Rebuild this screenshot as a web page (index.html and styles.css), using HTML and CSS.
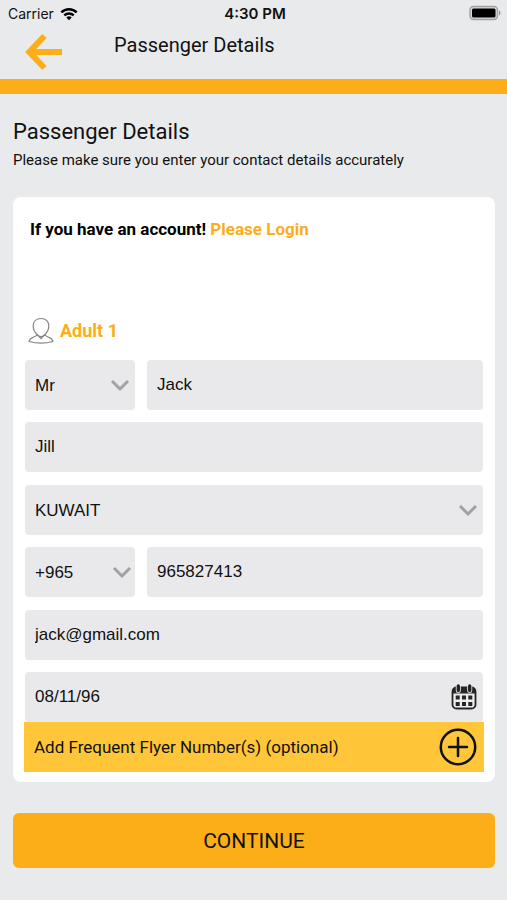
FILE: index.html
```html
<!DOCTYPE html>
<html lang="en">
<head>
<meta charset="utf-8">
<meta name="viewport" content="width=device-width, initial-scale=1">
<title>Passenger Details</title>
<link rel="stylesheet" href="styles.css">
</head>
<body>
<header class="top">
  <div class="status">
    <div class="carrier">
      <span>Carrier</span>
      <svg width="18" height="14" viewBox="0 0 18 14" fill="none" stroke="#000" stroke-width="2.4" aria-hidden="true">
        <path d="M1.3 5.4a10.9 10.9 0 0 1 15.4 0"/>
        <path d="M4.3 8.4a6.7 6.7 0 0 1 9.4 0"/>
        <path d="M9 13.3 6.3 10.5a3.9 3.9 0 0 1 5.4 0z" fill="#000" stroke="none"/>
      </svg>
    </div>
    <time class="clock">4:30 PM</time>
    <svg class="battery" width="32" height="16" viewBox="0 0 32 16" aria-hidden="true">
      <rect x="0" y=".5" width="27.500" height="13" rx="3.500" fill="#d8d8d9" stroke="#a2a2a3" stroke-width="1.400"/>
      <rect x="2" y="2.500" width="23.500" height="9" rx="1.500" fill="#000"/>
      <path d="M29 4.500v5c2-1 2-4 0-5z" fill="#929293"/>
    </svg>
  </div>
  <nav class="nav">
    <a class="back" href="#" aria-label="Back">
      <svg width="38" height="38" viewBox="0 0 38 38" fill="none" stroke="#fbae17" stroke-width="6" aria-hidden="true">
        <path d="M19.500 3 4.300 19l15.200 16M4.300 19H37"/>
      </svg>
    </a>
    <span class="nav-title">Passenger Details</span>
  </nav>
</header>

<main class="page">
  <h1 class="heading">Passenger Details</h1>
  <p class="intro">Please make sure you enter your contact details accurately</p>

  <form class="form">
    <section class="card">
      <p class="account">If you have an account! <a href="#">Please Login</a></p>
      <h2 class="passenger">
        <svg width="26" height="27" viewBox="0 0 26 27" fill="none" stroke="#858585" stroke-width="1.2" stroke-linejoin="round" aria-hidden="true">
          <path d="M13 1.500c-5 0-7.800 3.300-7.800 7.500 0 3.500 2 7 4.600 9.200 2 1.700 4.400 1.700 6.400 0C18.800 16 20.800 12.500 20.800 9c0-4.200-2.800-7.500-7.800-7.500z"/>
          <path d="M9.200 17.700c-.6 1.300-2.500 1.900-4.300 2.700C2.700 21.300 1.500 22.600 1 24.500c7 1.800 17 1.800 24 0-.5-1.900-1.700-3.200-3.900-4.100-1.800-.8-3.700-1.400-4.300-2.700M9.200 17.700 13 21.500l3.800-3.800"/>
        </svg>
        Adult 1
      </h2>

      <div class="groups">
        <div class="group">
          <div class="row">
            <div class="field short">
              <select aria-label="Title"><option>Mr</option></select>
              <svg class="chevron" width="20" height="12" viewBox="0 0 20 12" aria-hidden="true"><path d="m2 2 8 8 8-8"/></svg>
            </div>
            <div class="field"><input type="text" value="Jack" aria-label="First name"></div>
          </div>
          <div class="field"><input type="text" value="Jill" aria-label="Last name"></div>
        </div>
        <div class="group">
          <div class="field">
            <select aria-label="Country"><option>KUWAIT</option></select>
            <svg class="chevron" width="20" height="12" viewBox="0 0 20 12" aria-hidden="true"><path d="m2 2 8 8 8-8"/></svg>
          </div>
          <div class="row">
            <div class="field short code">
              <select aria-label="Country code"><option>+965</option></select>
              <svg class="chevron" width="20" height="12" viewBox="0 0 20 12" aria-hidden="true"><path d="m2 2 8 8 8-8"/></svg>
            </div>
            <div class="field"><input type="tel" value="965827413" aria-label="Phone number"></div>
          </div>
        </div>
        <div class="group">
          <div class="field"><input type="email" value="jack@gmail.com" aria-label="Email"></div>
          <div class="field">
            <input type="text" value="08/11/96" aria-label="Date of birth">
            <svg class="calendar" width="26" height="26" viewBox="0 0 26 26" aria-hidden="true">
              <rect x="1.500" y="3.500" width="23" height="21" rx="4" fill="#ededee" stroke="#252525" stroke-width="1.800"/>
              <path d="M1.500 9.500v-2a4 4 0 0 1 4-4h15a4 4 0 0 1 4 4v2z" fill="#252525"/>
              <path d="M7.300 3v3.500M18.700 3v3.500" stroke="#ededee" stroke-width="5" stroke-linecap="round"/>
              <path d="M7.300 2v4.500M18.700 2v4.500" stroke="#252525" stroke-width="3.400" stroke-linecap="round"/>
              <path d="M4.700 11.500h4v4h-4zM11 11.500h4v4h-4zM17.300 11.500h4v4h-4zM4.700 18h4v4h-4zM11 18h4v4h-4zM17.300 18h4v4h-4z" fill="#252525"/>
            </svg>
          </div>
        </div>
      </div>

      <button class="flyer" type="button">
        <span>Add Frequent Flyer Number(s) (optional)</span>
        <svg width="38" height="38" viewBox="0 0 38 38" fill="none" stroke="#111" stroke-width="2.500" aria-hidden="true">
          <circle cx="19" cy="19" r="17.200"/>
          <path d="M19 10v18M10 19h18" stroke-linecap="round"/>
        </svg>
      </button>
    </section>
    <button class="continue" type="submit">CONTINUE</button>
  </form>
</main>
</body>
</html>
```
FILE: styles.css
```css
* {
  box-sizing: border-box;
}

body {
  margin: 0;
  min-height: 100vh;
  background: #e9eaec;
  color: #111;
  font-family: Roboto, "Liberation Sans", sans-serif;
}

button,
input,
select {
  margin: 0;
  border: 0;
  border-radius: 0;
  color: inherit;
}

svg {
  display: block;
  flex: none;
  overflow: visible;
}

.top {
  border-bottom: 15px solid #fbae17;
}

.status {
  display: grid;
  grid-template-columns: 1fr auto 1fr;
  align-items: center;
  height: 28px;
  padding: 0 5px 0 8px;
  font-family: Inter, "Liberation Sans", sans-serif;
  font-size: 15px;
  line-height: 28px;
}

.carrier {
  display: flex;
  align-items: center;
  gap: 6px;
  font-size: 14px;
}

.clock {
  font-weight: 600;
}

.battery {
  justify-self: end;
}

.nav {
  display: flex;
  gap: 51px;
  height: 51px;
  padding: 5px 25px 0;
}

.back {
  align-self: flex-start;
}

.nav-title {
  font-size: 20px;
  line-height: 24px;
}

.page {
  padding: 24px 12px 32px 13px;
}

.heading {
  margin: 0;
  font-size: 22px;
  font-weight: 400;
  line-height: 28px;
}

.intro {
  margin: 4px 0 27px;
  font-size: 15px;
  line-height: 20px;
}

.card {
  padding: 20px 11px 10px;
  border-radius: 8px;
  background: #fff;
}

.account {
  margin: 0 6px 76px;
  color: #000;
  font-size: 17px;
  font-weight: 700;
  line-height: 24px;
}

.account a {
  color: #fbae17;
  text-decoration: none;
}

.passenger {
  display: flex;
  align-items: center;
  gap: 6px;
  margin: 0 4px 16px;
  color: #fbae17;
  font-size: 18px;
  font-weight: 700;
  line-height: 24px;
}

.groups {
  display: grid;
  gap: 13px;
  padding: 0 1px;
}

.group {
  display: grid;
  gap: 12px;
}

.row {
  display: flex;
  gap: 12px;
}

.field {
  position: relative;
  flex: 1;
  min-width: 0;
  height: 50px;
}

.short {
  flex: 0 0 110px;
}

.field input,
.field select {
  width: 100%;
  height: 100%;
  padding: 0 10px;
  border-radius: 4px;
  background: #e9e9eb;
  appearance: none;
  font-family: "Liberation Sans", sans-serif;
  font-size: 17px;
}

.chevron {
  position: absolute;
  top: 19px;
  right: 5px;
  fill: none;
  stroke: #a2a2a3;
  stroke-width: 3;
  pointer-events: none;
}

.code .chevron {
  right: 3px;
}

.calendar {
  position: absolute;
  top: 12px;
  right: 6px;
}

.flyer {
  display: flex;
  align-items: center;
  justify-content: space-between;
  width: 100%;
  height: 50px;
  padding: 0 7px 0 10px;
  background: #fec638;
  font-family: inherit;
  font-size: 17px;
  text-align: left;
}

.continue {
  width: 100%;
  height: 55px;
  margin-top: 31px;
  border-radius: 6px;
  background: #fbae17;
  font-family: inherit;
  font-size: 21px;
}
```
